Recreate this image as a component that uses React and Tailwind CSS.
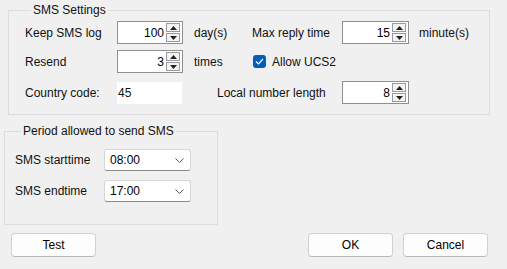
import React from 'react';

const font = { fontFamily: '"Liberation Sans", Arial, sans-serif' };

const Spin = ({ value, w = 'w-[66px]' }) => (
    <div className={`${w} h-[23px] bg-white border border-[#8f8f8f] flex items-center`}>
        <span className="flex-1 text-right pr-[2px] text-[12px] text-black">{value}</span>
        <div className="w-[14px] h-[19px] mr-[2px] flex flex-col gap-[1px]">
            <div className="flex-1 border border-[#9a9a9a] bg-[#f3f3f3] flex items-center justify-center">
                <svg width="7" height="4" viewBox="0 0 7 4"><path d="M0 4 L3.5 0 L7 4 Z" fill="#222" /></svg>
            </div>
            <div className="flex-1 border border-[#9a9a9a] bg-[#f3f3f3] flex items-center justify-center">
                <svg width="7" height="4" viewBox="0 0 7 4"><path d="M0 0 L3.5 4 L7 0 Z" fill="#222" /></svg>
            </div>
        </div>
    </div>
);

const Combo = ({ value }) => (
    <div className="w-[87px] h-[22px] bg-white border border-[#d6d6d6] border-b-[#8a8a8a] rounded-[3px] flex items-center pl-[5px] pr-[6px]">
        <span className="flex-1 text-[12px] text-black">{value}</span>
        <svg width="9" height="5" viewBox="0 0 9 5"><path d="M0.5 0.5 L4.5 4.5 L8.5 0.5" fill="none" stroke="#555" strokeWidth="1" /></svg>
    </div>
);

const Button = ({ children }) => (
    <button className="w-[85px] h-[24px] bg-[#fdfdfd] border border-[#d0d0d0] border-b-[#b8b8b8] rounded-[4px] text-[12px] text-black">
        {children}
    </button>
);

export default function App() {
    return (
        <div className="w-[507px] h-[269px] bg-[#f0f0f0] overflow-hidden text-[12px] text-[#111]" style={font}>
            {/* SMS Settings group */}
            <fieldset className="ml-[8px] mt-[2px] w-[482px] border border-[#dcdcdc] pl-[16px] pt-[3px] pb-[10px]">
                <legend className="ml-[6px] px-[2px] leading-[16px] text-[12px]">SMS Settings</legend>
                <div className="flex items-center h-[23px]">
                    <span className="w-[92px]">Keep SMS log</span>
                    <Spin value="100" />
                    <span className="ml-[11px] w-[58px]">day(s)</span>
                    <span className="w-[90px]">Max reply time</span>
                    <Spin value="15" w="w-[67px]" />
                    <span className="ml-[10px]">minute(s)</span>
                </div>
                <div className="flex items-center h-[23px] mt-[6px]">
                    <span className="w-[92px]">Resend</span>
                    <Spin value="3" />
                    <span className="ml-[11px] w-[59px]">times</span>
                    <span className="w-[13px] h-[13px] rounded-[3px] bg-[#005fb8] flex items-center justify-center">
                        <svg width="9" height="7" viewBox="0 0 9 7"><path d="M1 3.5 L3.5 6 L8 1" fill="none" stroke="#fff" strokeWidth="1.2" /></svg>
                    </span>
                    <span className="ml-[6px]">Allow UCS2</span>
                </div>
                <div className="flex items-center h-[23px] mt-[8px]">
                    <span className="w-[92px]">Country code:</span>
                    <div className="w-[65px] h-[22px] bg-white flex items-center pl-[1px]">45</div>
                    <span className="ml-[35px] w-[125px]">Local number length</span>
                    <Spin value="8" w="w-[67px]" />
                </div>
            </fieldset>

            {/* Period group */}
            <fieldset className="ml-[4px] mt-[8px] w-[214px] border border-[#dcdcdc] pl-[10px] pt-[10px] pb-[22px]">
                <legend className="ml-[6px] px-[2px] leading-[16px] text-[12px]">Period allowed to send SMS</legend>
                <div className="flex items-center">
                    <span className="w-[89px]">SMS starttime</span>
                    <Combo value="08:00" />
                </div>
                <div className="flex items-center mt-[9px]">
                    <span className="w-[89px]">SMS endtime</span>
                    <Combo value="17:00" />
                </div>
            </fieldset>

            <div className="flex items-center mt-[8px] pl-[11px] pr-[19px]">
                <Button>Test</Button>
                <div className="flex-1" />
                <div className="flex gap-[10px]">
                    <Button>OK</Button>
                    <Button>Cancel</Button>
                </div>
            </div>
        </div>
    );
}
